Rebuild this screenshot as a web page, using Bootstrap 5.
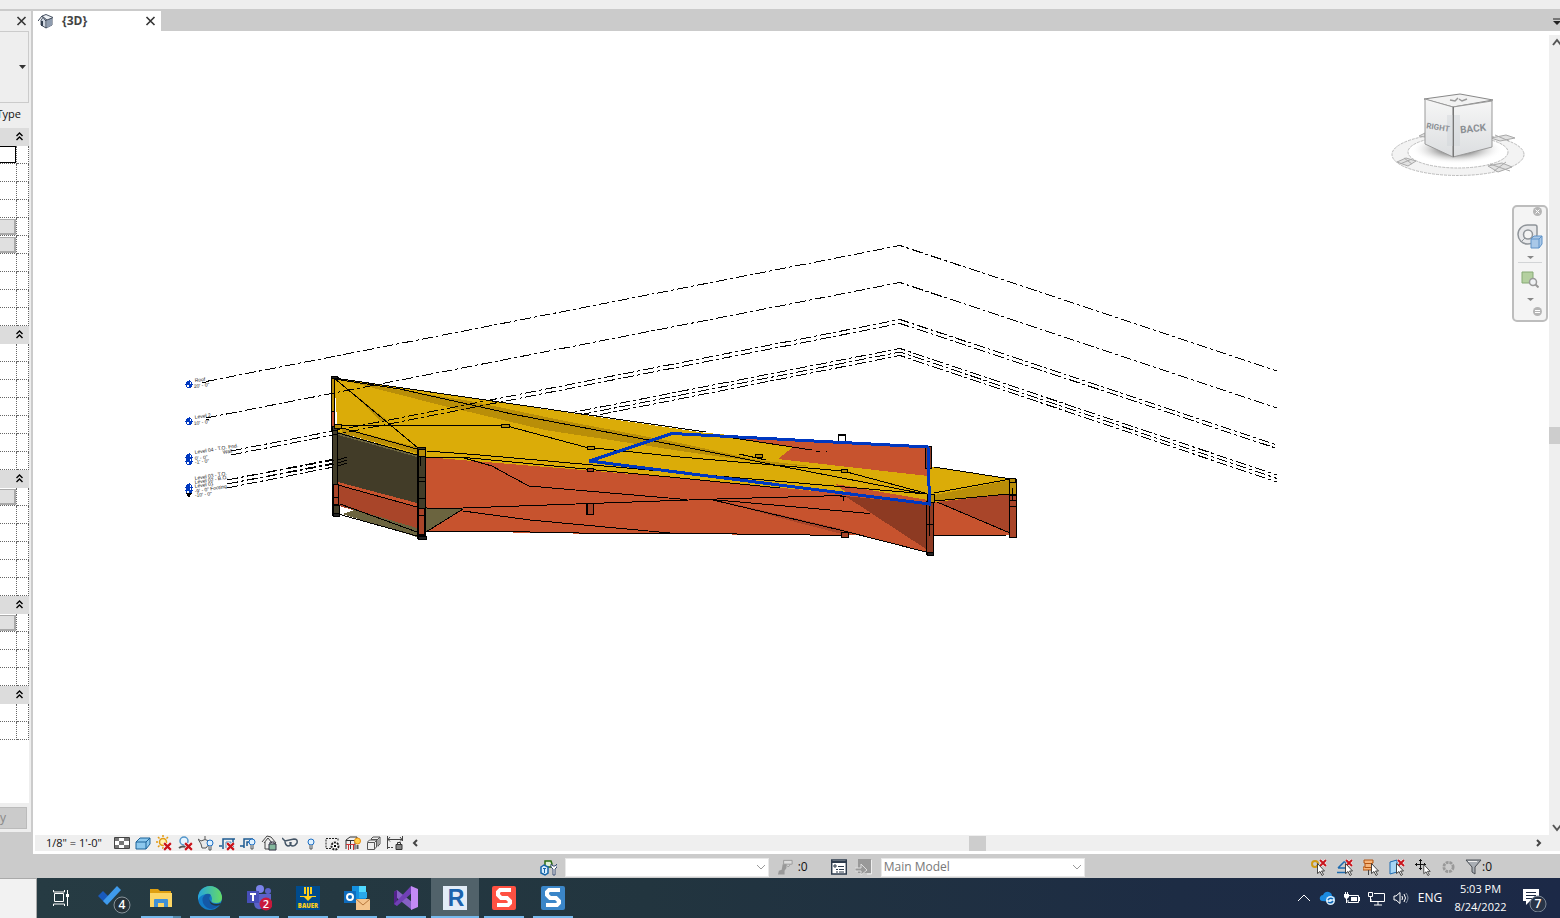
<!DOCTYPE html>
<html lang="en">
<head>
<meta charset="utf-8">
<title>{3D}</title>
<meta name="viewport" content="width=device-width, initial-scale=1">
<link href="https://cdn.jsdelivr.net/npm/bootstrap@5.3.0/dist/css/bootstrap.min.css" rel="stylesheet">
<style>
body{font-family:"Open Sans","Noto Sans",sans-serif;font-size:12px;line-height:16px;color:#111;background:#cbcbcb}
button,a{color:inherit;text-decoration:none}
button{background:none;border:0;padding:0}
svg{display:block;flex:none}
.ribbon-edge{height:9px;background:#eee}
.props{width:31px;margin-top:2px;background:#eee}
.props-wrap{width:33px;height:823px;padding-right:2px;background:#cbcbcb;overflow:hidden}
.props-head{height:20px;padding-right:4px}
.type-box{height:72px;width:29px;border:1px solid #cbcbcb;border-left:0;padding-right:2px}
.edit-type{height:25px;width:29px;padding:0 8px 4px 0;font-size:11px}
.grid-box{width:29px;height:675px;background:#fff;overflow:hidden}
.pgrid{width:100%;border-collapse:separate;border-spacing:0;table-layout:fixed}
.pgrid th{height:18px;padding:0 6px 2px 0;background:#dcdcdc}
.pgrid th svg{margin-left:auto}
.pgrid td{height:18px;padding:0;border-right:1px dotted #666;border-bottom:1px dotted #666}
.pgrid .field{display:block;width:16px;height:17px;border:1px solid #000;border-left:0;border-radius:0;padding:0;background:#fff}
.pgrid .cell-btn{display:block;width:16px;height:16px;background:#e0e0e0;border:solid #aaa;border-width:1px 2px 2px 0}
.apply{width:27px;height:22px;background:#cbcbcb;border:1px solid #bbb;border-left:0;color:#888;padding-right:20px}
.tabs{height:22px;background:#cbcbcb}
.doc-tab{width:128px;height:20px;margin-top:2px;padding:0 5px;background:#fff;font-weight:700;color:#444}
.view-col{background:#fff}
.view-foot{padding-bottom:3px}
.vscroll{width:11px;background:#efefef;overflow:hidden}
.vthumb{width:11px;height:17px;background:#cdcdcd}
.cube{right:22px;top:59px}
.navbar-3d{right:1px;top:174px;width:36px;height:117px;background:#f4f4f4;border:2px solid #bdbdbd;border-radius:5px}
.viewbar{height:16px;background:#efefef;margin-left:2px}
.scale{width:79px;padding-left:11px;font-size:11px}
.vicons{gap:5px}
.hthumb{width:17px;height:15px;background:#cdcdcd}
.status{height:24px;padding-top:2px;background:#cbcbcb}
.status .form-select{height:19px;padding:0 4px 0 2px;border:1px solid #e8e8e8;border-radius:0;font-size:12px;line-height:16px;color:#777;background-color:#fff;background-size:12px;background-position:right 1px center;
background-image:url("data:image/svg+xml,%3Csvg xmlns='http://www.w3.org/2000/svg' viewBox='0 0 12 12'%3E%3Cpath d='M2 4l4 4 4-4' fill='none' stroke='%23999'/%3E%3C/svg%3E")}
.sel-tools{gap:10px;padding-right:68px}
.taskrow{height:40px}
.desk{width:37px;background:#f2f2f2;border-right:1px solid #aaa;border-top:1px solid #aaa}
.taskbar{background:linear-gradient(90deg,#263b43,#22353f 40%,#1d2c44 75%,#1c2947);color:#fff}
.tb{width:48px;height:40px;position:relative}
.tb.first{margin-right:2px}
.tb.run::after{content:"";position:absolute;left:4px;right:4px;bottom:0;height:2px;background:#76b9ed}
.tb.on{background:#51626a}.tb.on::after{left:0;right:0}
.tb.stack::after{right:12px}
.tb.stack::before{content:"";position:absolute;right:4px;width:8px;bottom:0;height:2px;background:#5389ac}
.clock{font-size:11px;line-height:18px;width:59px}
.tray{gap:8px;padding-right:11px}
.lbl{font-family:"Liberation Sans",sans-serif;font-size:5px;fill:#222}
</style>
</head>
<body class="vh-100 overflow-hidden d-flex flex-column">
<svg width="0" height="0" class="position-absolute">
<defs>
<symbol id="xx" viewBox="0 0 10 10"><path d="M1 1l8 8M9 1l-8 8" stroke="#333" stroke-width="1.600" fill="none"/></symbol>
<symbol id="red" viewBox="0 0 8 8"><path d="M1 1l6 6M7 1l-6 6" stroke="#fff" stroke-width="3"/><path d="M1 1l6 6M7 1l-6 6" stroke="#c8141c" stroke-width="2"/></symbol>
<symbol id="bulb" viewBox="0 0 8 12"><circle cx="4" cy="4" r="3" fill="#dff1ff" stroke="#1d6fc4"/><path d="M3 7v4h2V7" fill="#dff1ff" stroke="#555"/></symbol>
<symbol id="cur" viewBox="0 0 8 13"><path d="M.5.5v10l2.500-2 2 4 1.500-1-2-3.500h3z" fill="#fff" stroke="#333" stroke-width=".9"/></symbol>
<symbol id="chev" viewBox="0 0 7 9"><path d="M.5 4l3-3 3 3M.5 8l3-3 3 3" fill="none" stroke="#000" stroke-width="1.400"/></symbol>
</defs></svg>

<div class="ribbon-edge flex-shrink-0"></div>
<main class="d-flex flex-grow-1" style="min-height:0">
  <aside class="props-wrap flex-shrink-0">
    <div class="props d-flex flex-column">
      <div class="props-head d-flex align-items-center justify-content-end flex-shrink-0"><button aria-label="Close properties"><svg width="11" height="10"><use href="#xx"/></svg></button></div>
      <div class="type-box d-flex align-items-center justify-content-end"><button aria-label="Type selector"><svg width="7" height="4"><path d="M0 0h7L3.500 4z" fill="#333"/></svg></button></div>
      <div class="edit-type d-flex align-items-center justify-content-end"><a href="#" class="text-nowrap">Type</a></div>
      <div class="grid-box">
        <table class="pgrid"><colgroup><col style="width:17px"><col></colgroup><tbody id="rows"></tbody></table>
      </div>
      <div class="pt-1 pb-1"><button class="apply d-flex justify-content-end align-items-center" disabled>y</button></div>
    </div>
  </aside>
  <section class="d-flex flex-column flex-grow-1" style="min-width:0">
    <div class="tabs d-flex justify-content-between flex-shrink-0">
      <div class="doc-tab d-flex align-items-center">
        <svg width="16" height="16" viewBox="0 0 16 16"><path d="M3 7l4-5 7 3v7l-6 3-5-3z" fill="#cfd6e0" stroke="#4c5666"/><path d="M9 7l5-2v7l-5 3z" fill="#8f9caf"/><path d="M0 8l4-5 4 5M8 15V7l6-2" fill="none" stroke="#333f50"/><path d="M3 8h2v5H3z" fill="#333f50"/><path d="M4 3l4-1.500 7 3-6 2.500z" fill="#eef1f5" stroke="#4c5666"/></svg>
        <span class="ms-2">{3D}</span>
        <button class="ms-auto" aria-label="Close view"><svg width="11" height="10"><use href="#xx"/></svg></button>
      </div>
      <button class="align-self-center pt-1" aria-label="Tab list"><svg width="7" height="8"><path d="M0 1h8" stroke="#222" stroke-width="1"/><path d="M0 3h8L4 7z" fill="#222"/></svg></button>
    </div>
    <div class="d-flex flex-grow-1 view-col" style="min-height:0">
      <div class="position-relative flex-grow-1" style="min-width:0">
        <svg class="w-100 h-100" viewBox="33 31 1516 804" shape-rendering="crispEdges" role="img" aria-label="3D model view">
          <g fill="none" stroke="#000" stroke-dasharray="11 3 3 3">
            <path d="M227 480L900 348.500 1277 475M227 484L900 352 1277 478.500M227 488L900 355.500 1277 482"/>
          </g>
          <!-- wall and roof surfaces -->
          <path d="M334 378L706 433 845 443 932 467 1011 479 1011 495 930 504 680 478 425 457 338 432z" fill="#dbac08"/>
          <path d="M706 432L845 441 932 464V445L735 436z" fill="#fff"/>
          <path d="M735 438L928 447V476L778 459 793 447z" fill="#c7532e"/>
          <path d="M350 382L470 401 560 420 680 443 757 460 810 466 780 465 680 451 630 443 545 430 440 405zM347 388L388 421H380z" fill="#b98e08"/>
          <path d="M425 457L680 478 845 494 926 502 930 553 860 535 603 534 422 531z" fill="#c7532e"/>
          <path d="M835 484L928 500V504L850 495z" fill="#c7532e"/>
          <path d="M845 496L926 504V549z" fill="#8d3a22"/>
          <path d="M717 500L842 529V534L780 518z" fill="#a94529"/>
          <path d="M934 502L1010 494V535L934 535z" fill="#c7532e"/>
          <path d="M938 502L1010 494V533z" fill="#a94529"/>
          <path d="M934 495L1010 480V494L934 501z" fill="#b98e08"/>
          <path d="M338 432L417 455V461L338 436z" fill="#6b643f"/>
          <path d="M338 435L417 457V503L338 482z" fill="#423c28"/>
          <path d="M338 482L417 503V508L338 487z" fill="#c7532e"/>
          <path d="M336 485L417 507V529L336 505z" fill="#a94529"/>
          <path d="M336 504L417 528V537L342 514 354 510zM426 508H464L426 532z" fill="#6b643f"/>
          <path d="M342 428L417 447V453L342 433z" fill="#b98e08"/>
          <!-- edges -->
          <g fill="none" stroke="#000">
            <path d="M334 378L706 432M334 379L400 389 512 414 680 446 780 466 925 494M334 378L418 448M338 425.500H505L585 447 680 457 843 471 925 493M427 451L480 455 717 476 927 494M425 457L470 458 680 478 780 488"/>
            <path d="M733 438L812 450M816 451h4M826 451h1M739 454L766 460" />
            <path d="M464 458L492 466 512 477 529 486 680 499 687 500M427 508.500L463 508 717 499 842 495.500M463 511L530 520 670 533M425 531.500H505L603 533.500H700L846 535.500M717 500L870 513.500M713 500L840 530 926 552"/>
            <path d="M342 428L417 449M338 433L417 455M338 485L417 507 427 508M340 504L417 532M338 514L417 536M426 532L463 509M934 467L1011 479M934 493L1011 479M934 501L1009 494M937 502L1010 533M934 535.500H1006"/>
            <path d="M338 460L347 457M338 463L347 460M338 466L347 463"/>
          </g>
          <g stroke="#000">
            <path d="M331.500 377.500h7" fill="none"/>
            <path d="M331.500 377v53h3v-53z" fill="#b98e08"/><path d="M331.500 411h3v15h-3z" fill="#c7532e"/>
            <path d="M332.500 426h5v89h-5z" fill="#423c28"/><path d="M333.500 484h5v20h-5z" fill="#a94529"/><path d="M333.500 505h6v10h-6zM334 497h5" fill="#423c28"/>
            <path d="M334 424h7v4h-7z" fill="#b98e08"/>
            <path d="M417.500 447.500h8v91h-8z" fill="#423c28"/><path d="M418.500 449h7v7h-7z" fill="#b98e08"/><path d="M418.500 508h6v27h-6z" fill="#a94529"/><path d="M418 477h7M418 481h7M418 498h7M418 515h7M418 534h7M420 457v9M418.500 456v80" fill="none"/>
            <path d="M925.500 446h6v22h-6zM926.500 501h7v53h-7z" fill="#8d3a22"/><path d="M927 494h7v8h-7z" fill="#b98e08"/><path d="M926 524h8M929.500 502v34" fill="none"/>
            <path d="M1009.500 479h7v16h-7z" fill="#b98e08"/><path d="M1009.500 495h7v42h-7z" fill="#a94529"/><path d="M1009 500h8M1009 506h8M1012.500 488v13M1003 494h14" fill="none"/>
            <path d="M586.500 503.500h7v11h-7zM587 468.500h6v3h-6zM841 532h7v5h-7z" fill="#a94529"/>
            <path d="M838.500 434.500h7v8h-7z" fill="#fff"/><path d="M838 435.500h8M587.500 504v11" fill="none"/>
            <path d="M501 424h8v3h-8zM587 446h7v3h-7zM755 454h7v3h-7zM841 469h6v3h-6zM1009 478h6v4h-6z" fill="#b98e08"/>
            <path d="M843.500 496v5M840 496h6" fill="none"/>
            <path d="M418 536h8v3h-8zM333 513h6v3h-6zM927 552h6v3h-6zM331 376h6v2h-6z" fill="#222"/>
          </g>
          <path d="M589.500 461L672 433.500 928 447 929.500 504z" fill="none" stroke="#0038c0" stroke-width="3"/>
          <g fill="none" stroke="#000" stroke-dasharray="11 3 3 3">
            <path d="M206 381.500L900 245.500 1277 371M206 418L900 282.500 1277 408M231 451L900 319.500 1277 445M231 455L900 323.500 1277 448.500M227 480L334 460M227 484L334 464"/>
          </g>
          <g fill="#0038c0" stroke="#0038c0">
            <g id="lv"><circle cx="189" cy="384.500" r="3" fill="#fff"/><path d="M189 381.500v3h-3zM189 387.500v-3h3z"/></g>
            <use href="#lv" y="37"/><use href="#lv" y="73"/><use href="#lv" y="77"/><use href="#lv" y="103"/><use href="#lv" y="106"/>
          </g>
          <path d="M186 493h6l-3 5z"/>
          <path d="M202 382.500h4M206 419.500h3" stroke="#000"/>
          <g class="lbl">
            <text x="195" y="382" transform="rotate(-6 195 382)">Roof</text><text x="194" y="388" transform="rotate(-6 194 388)">20' - 0"</text>
            <text x="195" y="419" transform="rotate(-9 195 419)">Level 2</text><text x="194" y="425" transform="rotate(-6 194 425)">10' - 0"</text>
            <text x="195" y="454" transform="rotate(-9 195 454)">Level 04 - T.O. Fnd.</text><text x="223" y="454" transform="rotate(-9 223 454)">Wall</text>
            <text x="195" y="460" transform="rotate(-6 195 460)">0' - 0"</text><text x="195" y="464" transform="rotate(-6 195 464)">-1' - 0"</text>
            <text x="195" y="480" transform="rotate(-9 195 480)">Level 03 - T.O.</text><text x="195" y="484" transform="rotate(-9 195 484)">Level 02 - B.O.</text>
            <text x="195" y="488" transform="rotate(-9 195 488)">Level 01</text><text x="195" y="493" transform="rotate(-9 195 493)">-9' - 0" Footing</text><text x="195" y="497" transform="rotate(-6 195 497)">-10' - 0"</text>
          </g>
        </svg>
        <svg class="cube position-absolute" width="140" height="92" viewBox="1387 90 140 92" role="img" aria-label="View cube">
          <defs><radialGradient id="sh"><stop offset=".4" stop-color="#888" stop-opacity=".8"/><stop offset="1" stop-color="#fff" stop-opacity="0"/></radialGradient><linearGradient id="fc" x2="0" y2="1"><stop stop-color="#f6f6f6"/><stop offset="1" stop-color="#dcdee0"/></linearGradient></defs>
          <ellipse cx="1458" cy="154.500" rx="66" ry="21" fill="#f3f3f3" stroke="#bbb" stroke-dasharray="3 1"/>
          <ellipse cx="1458" cy="152" rx="50" ry="16" fill="#fff" stroke="#bbb" stroke-dasharray="3 1"/>
          <ellipse cx="1457" cy="149" rx="46" ry="15" fill="url(#sh)"/>
          <path d="M1397 162l9-4 10 3-8 5zM1400 164l12-5M1404 158l8 6M1488 166l14-3 10 4-14 5zM1490 164l20 7M1494 171l12-9M1491 138l15-3 9 3-15 3zM1495 135l14 6M1419 136l6-3v4z" fill="#e2e2e2" stroke="#aaa"/>
          <path d="M1424 99L1460 94 1493 100 1453 107z" fill="#f2f2f2" stroke="#888"/>
          <path d="M1425 99L1453 107V157L1425 144z" fill="url(#fc)" stroke="#999"/><path d="M1453 107L1492 101V147L1453 157z" fill="url(#fc)" stroke="#999"/>
          <path d="M1447 115h13v31h-13z" fill="#cdd3d8" opacity=".4"/><path d="M1453.500 107v50" stroke="#777"/>
          <path d="M1450 100l5 1 3-3M1459 99l3 2 5-2" stroke="#999" stroke-width="1.500" fill="none"/>
          <g font-family="Liberation Sans Narrow,Roboto,sans-serif" font-weight="700" font-size="10" fill="#8b8f94" text-anchor="middle"><text font-size="8" x="1438" y="130" transform="rotate(9 1438 127)">RIGHT</text><text x="1473" y="132" transform="rotate(-6 1473 128)">BACK</text></g>
        </svg>
        <div class="navbar-3d position-absolute d-flex flex-column align-items-center">
          <button class="align-self-end me-1" aria-label="Close"><svg width="9" height="9" viewBox="0 0 9 9"><circle cx="4.500" cy="4.500" r="4.500" fill="#b5b5b5"/><path d="M2.500 2.500l4 4M6.500 2.500l-4 4" stroke="#fff"/></svg></button>
          <button class="mt-2" aria-label="Steering wheel"><svg width="26" height="26" viewBox="0 0 26 26"><path d="M11 1h7q2 0 2 2v7a9.500 9.500 0 1 1-9-9z" fill="#e7e8ea" stroke="#8f9499" stroke-width="1.500"/><circle cx="11" cy="10.500" r="4.500" fill="#f4f4f4" stroke="#8f9499" stroke-width="1.500"/><path d="M8 14l-4 4" stroke="#8f9499"/><path d="M14 15l3-3h8v8l-3 4h-8z" fill="#a9c8e8" stroke="#5e92c8"/><path d="M14 15h8v9M22 15l3-3" fill="none" stroke="#5e92c8"/></svg></button>
          <button class="mt-1" aria-label="Wheel options"><svg width="7" height="8"><path d="M0 2h7L3.500 5z" fill="#888"/></svg></button>
          <hr class="m-0 w-75 border-secondary">
          <button class="mt-2" aria-label="Zoom region"><svg width="18" height="17" viewBox="0 0 18 17"><path d="M1 1h11v11H1z" fill="#b4d0a0" stroke="#86aa74"/><circle cx="12" cy="11" r="3.500" fill="#f0f2f4" stroke="#999" stroke-width="1.500"/><path d="M14.500 13.500l3 3" stroke="#999" stroke-width="2"/></svg></button>
          <button class="mt-2" aria-label="Zoom options"><svg width="7" height="8"><path d="M0 2h7L3.500 5z" fill="#888"/></svg></button>
          <button class="mt-auto align-self-end me-1 mb-1" aria-label="Options"><svg width="9" height="9" viewBox="0 0 9 9"><circle cx="4.500" cy="4.500" r="4.500" fill="#b5b5b5"/><path d="M2 3.500h5M2 5.500h5" stroke="#fff"/></svg></button>
        </div>
      </div>
      <div class="vscroll d-flex flex-column justify-content-between mt-1">
        <button class="align-self-end" aria-label="Scroll up"><svg width="8" height="12"><path d="M1 10l4-5 4 5" fill="none" stroke="#555" stroke-width="2"/></svg></button>
        <div class="vthumb"></div>
        <button class="align-self-end" aria-label="Scroll down"><svg width="8" height="12"><path d="M1 2l4 5 4-5" fill="none" stroke="#555" stroke-width="2"/></svg></button>
      </div>
    </div>
    <div class="view-col view-foot flex-shrink-0">
      <div class="viewbar d-flex align-items-center">
        <span class="scale text-nowrap">1/8" = 1'-0"</span>
        <div class="vicons d-flex">
          <button aria-label="Detail level"><svg width="16" height="16" viewBox="0 0 16 16"><path d="M.5 2.500h15v11H.5z" fill="#fff" stroke="#444"/><path d="M1 3h4v3H1zM10 3h5v3h-5zM5 6h5v4H5zM1 10h4v3H1zM10 10h5v3h-5z" fill="#777"/></svg></button>
          <button aria-label="Visual style"><svg width="16" height="16" viewBox="0 0 16 16"><path d="M1 7l4-4h10v6l-4 5H1z" fill="#8cc8ee" stroke="#1b6299"/><path d="M1 7h10v7M11 7l4-4" fill="none" stroke="#1b6299"/></svg></button>
          <button aria-label="Sun path"><svg width="16" height="16" viewBox="0 0 16 16"><circle cx="7" cy="7" r="3.500" fill="#fff3b0" stroke="#e39b12" stroke-width="1.500"/><path d="M7 0v2M7 12v2M0 7h2M2 2l1.500 1.500M12 2l-1.500 1.500M2 12l1.500-1.500" stroke="#e39b12" stroke-width="1.500"/><use href="#red" x="7" y="7" width="9" height="9"/></svg></button>
          <button aria-label="Shadows"><svg width="16" height="16" viewBox="0 0 16 16"><circle cx="7" cy="6" r="4" fill="#e6f4ff" stroke="#5295c9" stroke-width="1.500"/><path d="M2 13q4-3 8 0" stroke="#555" stroke-width="2" fill="none"/><use href="#red" x="7" y="7" width="9" height="9"/></svg></button>
          <button aria-label="Rendering"><svg width="16" height="16" viewBox="0 0 16 16"><path d="M0 4l3 2q4-3 8 0-1 6-3 7H4L3 9z" fill="#e8e8e8" stroke="#555"/><path d="M7 1v3" stroke="#555"/><use href="#bulb" x="8" y="4" width="8" height="12"/></svg></button>
          <button aria-label="Crop view"><svg width="16" height="16" viewBox="0 0 16 16"><path d="M4 14V4h12M0 11h3M14 4v10" fill="none" stroke="#1f5c92" stroke-width="1.500"/><path d="M7 13V7h5v6" fill="none" stroke="#4b91c5"/><use href="#red" x="7" y="7" width="9" height="9"/></svg></button>
          <button aria-label="Crop region"><svg width="16" height="16" viewBox="0 0 16 16"><path d="M4 13V4h9M0 11h4M7 11V7h4" fill="none" stroke="#1f5c92" stroke-width="1.500"/><use href="#bulb" x="8" y="3" width="8" height="12"/></svg></button>
          <button aria-label="Lock 3D view"><svg width="16" height="16" viewBox="0 0 16 16"><path d="M1 7l5-6 4 1 5 6-2 1v5H4V7" fill="#eee" stroke="#444"/><path d="M3 8l4-5 4 5" fill="none" stroke="#444"/><path d="M8 9h7v6H8z" fill="#83b79c" stroke="#334"/><path d="M9 9V7h4v2" fill="none" stroke="#334"/></svg></button>
          <button aria-label="Temporary hide"><svg width="16" height="16" viewBox="0 0 16 16"><path d="M0 3l3 3 9-2q4 0 3 4-2 3-4 3-3 0-3-4M3 6q0 4 3 5 3 0 3-4" fill="none" stroke="#456" stroke-width="1.500"/></svg></button>
          <button aria-label="Reveal hidden"><svg width="16" height="16" viewBox="0 0 16 16"><use href="#bulb" x="4" y="3" width="8" height="12"/></svg></button>
          <button aria-label="Temporary view"><svg width="16" height="16" viewBox="0 0 16 16"><path d="M2 3.500h12v3M7 13.500H2v-10" fill="none" stroke="#222" stroke-dasharray="2 1"/><circle cx="11" cy="11" r="3.500" fill="#fff" stroke="#222" stroke-width="2" stroke-dasharray="2 1"/><path d="M10 10h2v2h-2z"/></svg></button>
          <button aria-label="Analytical model"><svg width="16" height="16" viewBox="0 0 16 16"><path d="M1 14V5l4-3h7v5M1 5.500h9v9M5.500 5v9" fill="none" stroke="#333"/><path d="M3.500 9v6M8.500 9v6M1 9.500h9" stroke="#c33"/><circle cx="12.500" cy="6" r="3" fill="#ffd04a" stroke="#e38b12"/><path d="M12.500 10v4" stroke="#555" stroke-width="2"/></svg></button>
          <button aria-label="Displacement sets"><svg width="16" height="16" viewBox="0 0 16 16"><path d="M1.500 7.500h7v7h-7zM1.500 7l2-2h7v7l-2 2M5 4l2-2h7v7l-2 2M8.500 7.500l2-2M5 4.500h7v7M12 4l2-2" fill="none" stroke="#555"/></svg></button>
          <button aria-label="Constraints"><svg width="16" height="16" viewBox="0 0 16 16"><path d="M.5 1v13M15.500 1v5M1 4.500h14M3 2L1 4.500l2 2M13 2l2 2.500-2 2" fill="none" stroke="#444"/><path d="M1 12.500h6" stroke="#444" stroke-dasharray="2 1"/><path d="M9 9.500h6v5H9z" fill="#888" stroke="#333"/><path d="M10.500 9V7.500h3V9" fill="none" stroke="#333"/></svg></button>
        </div>
        <button class="ms-2" aria-label="Scroll left"><svg width="8" height="10"><path d="M6 2L3 5l3 3" fill="none" stroke="#444" stroke-width="2"/></svg></button>
        <div class="flex-grow-1 d-flex justify-content-center"><div class="hthumb"></div></div>
        <button class="me-3" aria-label="Scroll right"><svg width="8" height="10"><path d="M1 2l3 3-3 3" fill="none" stroke="#444" stroke-width="2"/></svg></button>
      </div>
    </div>
  </section>
</main>
<footer class="flex-shrink-0">
  <div class="status d-flex align-items-center">
    <div class="d-flex align-items-center justify-content-end pe-2" style="width:36.200%">
      <button aria-label="Worksets"><svg width="17" height="17" viewBox="0 0 17 17"><path d="M5 2h6l1 3-1 3H5z" fill="#dff0d4" stroke="#2a6b12" stroke-width="1.500"/><path d="M1 8l3-2 4 2v6l-3 2-4-2z" fill="#d9efff" stroke="#1565a8" stroke-width="1.500"/><path d="M4.500 9v5M3 9.500h3" stroke="#1565a8"/><path d="M11 5v3l2 2v6h2v-6l2-2V5l-2 2h-2z" fill="#fff" stroke="#3a4f74"/></svg></button>
    </div>
    <select class="form-select" style="width:204px" aria-label="Active workset" disabled><option></option></select>
    <button class="d-flex align-items-center ms-2" aria-label="Editing requests"><svg width="17" height="18" viewBox="0 0 18 18"><path d="M7 2h9v4H7zM9 6l3 3 2-3" fill="#ddd" stroke="#999"/><path d="M6 6h4v4l-2 3v4H1l1-4 3-1z" fill="#999"/></svg><span class="ms-1">:0</span></button>
    <button style="margin-left:23px" aria-label="Design options"><svg width="16" height="16" viewBox="0 0 16 16"><path d="M.7 1h14.600v14H.7z" fill="#fff" stroke="#2e3c4d" stroke-width="1.500"/><path d="M1 3h14" stroke="#2e3c4d" stroke-width="2"/><path d="M3 6h2v2H3zM7 7.500h6M5 10.500h2M8 10.500h5M5 13h2M8 13h5" fill="none" stroke="#2e3c4d"/></svg></button>
    <button class="ms-2 me-2" aria-label="Add to set"><svg width="18" height="16" viewBox="0 0 18 16"><path d="M3 0h13v14H3z" fill="#999"/><path d="M16.500 1v14H12" stroke="#eee" fill="none"/><path d="M0 9h6V5l6 6-6 5v-4H0z" fill="#999" stroke="#ddd"/></svg></button>
    <select class="form-select" style="width:204px" aria-label="Active design option" disabled><option>Main Model</option></select>
    <div class="sel-tools ms-auto d-flex align-items-center">
      <button aria-label="Select links"><svg width="16" height="17" viewBox="0 0 16 17"><circle cx="4" cy="5" r="3" fill="none" stroke="#d19b13" stroke-width="2"/><path d="M5 7h5" stroke="#d19b13" stroke-width="2"/><use href="#red" x="8" y="0" width="8" height="8"/><use href="#cur" x="6" y="4" width="8" height="13"/></svg></button>
      <button aria-label="Select underlay"><svg width="16" height="17" viewBox="0 0 16 17"><path d="M1 9l6-6h4M0 13.500h10M1 9h9" stroke="#1e6bb0" stroke-width="1.500" fill="none"/><use href="#red" x="8" y="0" width="8" height="8"/><use href="#cur" x="8" y="4" width="8" height="13"/></svg></button>
      <button aria-label="Select pinned"><svg width="16" height="17" viewBox="0 0 16 17"><path d="M1 1h9v3H9v4h2v3H0V8h2V4H1z" fill="#f7b57a" stroke="#b45410"/><path d="M2 4.500h7M2 8.500h7" stroke="#b45410"/><path d="M5.500 11v5" stroke="#444"/><use href="#cur" x="8" y="4" width="8" height="13"/></svg></button>
      <button aria-label="Select by face"><svg width="16" height="17" viewBox="0 0 16 17"><path d="M1 3l7-2v12l-7 2z" fill="#a8d5f4" stroke="#1e6bb0"/><use href="#red" x="8" y="0" width="8" height="8"/><use href="#cur" x="7" y="4" width="8" height="13"/></svg></button>
      <button aria-label="Drag on selection"><svg width="17" height="17" viewBox="0 0 17 17"><path d="M5.500 0v11M0 5.500h11M4 2l1.500-1.500L7 2M4 9l1.500 1.500L7 9M2 4L.5 5.500 2 7M9 4l1.500 1.500L9 7" stroke="#111" fill="none"/><use href="#cur" x="8" y="5" width="8" height="12"/></svg></button>
      <button aria-label="Background processes"><svg width="13" height="14" viewBox="0 0 14 14"><circle cx="7" cy="7" r="5" fill="none" stroke="#999" stroke-width="3" stroke-dasharray="3 1"/></svg></button>
      <button class="d-flex align-items-center" aria-label="Filter"><svg width="17" height="16" viewBox="0 0 17 16"><path d="M1 1h15l-6 7v7l-3-2V8z" fill="#a9aeb4" stroke="#4a4f55"/><path d="M3 2.500h9" stroke="#eee"/></svg><span>:0</span></button>
    </div>
  </div>
  <div class="taskrow d-flex">
    <div class="desk flex-shrink-0"></div>
    <div class="taskbar flex-grow-1 d-flex align-items-center">
      <div class="d-flex" style="gap:1px">
        <button class="tb first d-grid" style="place-items:center" aria-label="Task view"><svg width="18" height="18" viewBox="0 0 18 18"><path d="M2.500 4.500h9v8h-9zM1.500 1v2h11V1M1.500 17v-2h11v2M15.500 1v16" fill="none" stroke="#fff"/><path d="M14 5h3v3h-3z" fill="#fff"/></svg></button>
        <button class="tb d-grid" style="place-items:center" aria-label="To Do"><svg class="ms-1" width="34" height="32" viewBox="-1 0 34 32"><path d="M0 14l5-5 8 8-5 5z" fill="#195abd"/><path d="M8 22l-3-3L19 4l4 4-14 15z" fill="#3f9bec"/><circle cx="24" cy="23" r="8" fill="#273239" stroke="#88939a"/><text x="24" y="27" font-size="12" font-weight="600" text-anchor="middle" fill="#fff">4</text></svg></button>
        <button class="tb run stack d-grid" style="place-items:center" aria-label="File Explorer"><svg width="24" height="24" viewBox="0 0 24 24"><path d="M1 3h8l2 2h11v4H1z" fill="#e0a011"/><path d="M1 7h22v14H1z" fill="#fdd665"/><path d="M5 21v-7q0-1 1-1h12q1 0 1 1v7h-4v-4H9v4z" fill="#4191d6"/></svg></button>
        <button class="tb run d-grid" style="place-items:center" aria-label="Edge"><svg width="24" height="24" viewBox="0 0 24 24"><defs><linearGradient id="eg" x2="1" y2="0"><stop stop-color="#26a4de"/><stop offset="1" stop-color="#65db65"/></linearGradient></defs><circle cx="12" cy="12" r="12" fill="#137cc8"/><path d="M0 12A12 12 0 0 1 24 12q0 5-6 5-6 0-4-4 0-5-6-5-6 1-8 6z" fill="url(#eg)"/><path d="M8 8q-5 3-3 9 3 6 9 6 5-1 8-5-5 2-9-1-4-4 0-8-2-2-5-1z" fill="#1458a6"/><path d="M13 10q-3 4 1 7 4 2 9 0l-1 2q-5 2-9-1-3-4 0-8z" fill="#22383f"/></svg></button>
        <button class="tb run d-grid" style="place-items:center" aria-label="Teams"><svg width="26" height="26" viewBox="0 0 26 26"><circle cx="14" cy="4" r="4" fill="#7b83eb"/><circle cx="22" cy="6" r="3" fill="#5b62c9"/><path d="M8 9h17v8q-1 4-6 4-3 4-7 3-4-1-4-6z" fill="#5b62c9"/><path d="M1 6h12v12H1z" fill="#464eb8"/><path d="M4 9h6M7 9v7" stroke="#fff" stroke-width="2"/><circle cx="20" cy="19" r="6.500" fill="#c8193c"/><text x="20" y="23" font-size="11" font-weight="600" text-anchor="middle" fill="#fff">2</text></svg></button>
        <button class="tb run d-grid" style="place-items:center" aria-label="Bauer"><svg width="24" height="24" viewBox="0 0 24 24"><path d="M0 0h24v24H0z" fill="#004b8d"/><path d="M9 1v7M12 1v10M15 1v7" stroke="#ffcf1a" stroke-width="2"/><path d="M4 10h16v1h-4l-4 4-4-4H4z" fill="#ffcf1a"/><text x="12" y="22" font-size="6" font-weight="800" text-anchor="middle" fill="#ffcf1a">BAUER</text></svg></button>
        <button class="tb run d-grid" style="place-items:center" aria-label="Outlook"><svg width="26" height="26" viewBox="0 0 26 26"><path d="M8 1h14v16H8z" fill="#1490df"/><path d="M15 1h7v6h-7z" fill="#50d9ff"/><path d="M15 7h8v6h-8z" fill="#28a8ea"/><path d="M0 6h12v12H0z" fill="#0f6cbd"/><circle cx="6" cy="12" r="3" fill="none" stroke="#fff" stroke-width="2"/><path d="M12 14h14v11H12z" fill="#f4c48c"/><path d="M12 14l7 6 7-6" fill="none" stroke="#b5763c"/></svg></button>
        <button class="tb run d-grid" style="place-items:center" aria-label="Visual Studio"><svg width="24" height="24" viewBox="0 0 24 24"><path d="M0 6l3-2 15 12V24L3 12z" fill="#8661c5"/><path d="M0 6l3-2v16l-3-2z" fill="#52218a"/><path d="M3 20l-3-2L17 0l2 6z" fill="#7040b5"/><path d="M17 0l7 3v18l-7 3z" fill="#c38bf5"/></svg></button>
        <button class="tb run on d-grid" style="place-items:center" aria-label="Revit"><svg width="24" height="24" viewBox="0 0 24 24"><path d="M0 0h24v24H0z" fill="#e3ecf7"/><text x="13" y="20" font-size="23" font-family="Liberation Sans" font-weight="700" text-anchor="middle" fill="#1b63ad">R</text></svg></button>
        <button class="tb run d-grid" style="place-items:center" aria-label="Snagit"><svg width="24" height="24" viewBox="0 0 24 24"><rect width="24" height="24" rx="2" fill="#ff5142"/><path d="M19 4H8L6 6v3l3 3h6l3 3v2l-2 2H5" fill="none" stroke="#fff" stroke-width="4"/></svg></button>
        <button class="tb run d-grid" style="place-items:center" aria-label="Snagit Editor"><svg width="24" height="24" viewBox="0 0 24 24"><rect width="24" height="24" rx="2" fill="#3b86c8"/><path d="M19 4H8L6 6v3l3 3h6l3 3v2l-2 2H5" fill="none" stroke="#fff" stroke-width="4"/></svg></button>
      </div>
      <div class="ms-auto d-flex align-items-center tray">
        <button aria-label="Show hidden icons"><svg width="14" height="10"><path d="M1 8l6-6 6 6" fill="none" stroke="#fff" stroke-width="1"/></svg></button>
        <button aria-label="OneDrive"><svg width="17" height="16" viewBox="0 0 17 16"><path d="M3 11q-3-1-2-4 1-2 3-2 2-4 6-3 3 1 3 4 3 0 3 3l-1 3z" fill="#1a8ae0"/><circle cx="11.500" cy="10.500" r="4.500" fill="#d8ecfb"/><path d="M9 10q2-3 5-1M14 11q-2 3-5 1" stroke="#0a66b8" fill="none" stroke-width="1.500"/></svg></button>
        <button aria-label="Battery"><svg width="16" height="14" viewBox="0 0 16 14"><path d="M5 4.500h9.500v7H4V9" fill="none" stroke="#fff"/><path d="M7 6h6v4H7zM15 6h1v4h-1zM0 3h5v3L3 8H2L0 6zM1 1h1v2H1zM3 1h1v2H3zM2 8h1v4H2z" fill="#fff"/></svg></button>
        <button aria-label="Network"><svg width="17" height="15" viewBox="0 0 17 15"><path d="M6 2.500h10.500v8H3V8M10 11v3M6 14h8M.5 1.500h4v4h-4zM2.500 6v5" fill="none" stroke="#fff"/></svg></button>
        <button aria-label="Volume"><svg width="16" height="14" viewBox="0 0 16 14"><path d="M1 5h2l4-3.500v11L3 9H1z" fill="none" stroke="#fff"/><path d="M9 5q1 2 0 4M11 3q3 4 0 8" fill="none" stroke="#fff"/><path d="M13 2q4 5 0 10" fill="none" stroke="#8793a5"/></svg></button>
        <button style="width:26px">ENG</button>
        <button class="clock text-nowrap">5:03 PM<br>8/24/2022</button>
        <button class="ms-1" aria-label="Notifications"><svg width="27" height="28" viewBox="0 0 27 28"><path d="M1 5h16v12H8l-4 4v-4H1z" fill="#fff"/><path d="M4 8.500h10M4 11.500h10M4 14.500h6" stroke="#1d2b45"/><circle cx="16" cy="20" r="8" fill="#283447" stroke="#7b8696"/><text x="16" y="24" font-size="12" font-weight="600" text-anchor="middle" fill="#fff">7</text></svg></button>
      </div>
    </div>
  </div>
</footer>
<script>
// Each group: one header and its rows; f = text field, b = browse button
const groups=["f...bb....",".......","b.....","b...",".."];
document.getElementById("rows").innerHTML=groups.map(g=>
 '<tr><th colspan="2"><svg width="7" height="9"><use href="#chev"/></svg></th></tr>'+
 [...g].map(c=>'<tr><td>'+(c==="f"?'<input class="field" aria-label="Value">':c==="b"?'<button class="cell-btn" aria-label="Edit"></button>':'')+'</td><td></td></tr>').join("")).join("");
</script>
<script src="https://cdn.jsdelivr.net/npm/bootstrap@5.3.0/dist/js/bootstrap.bundle.min.js"></script>
</body>
</html>
